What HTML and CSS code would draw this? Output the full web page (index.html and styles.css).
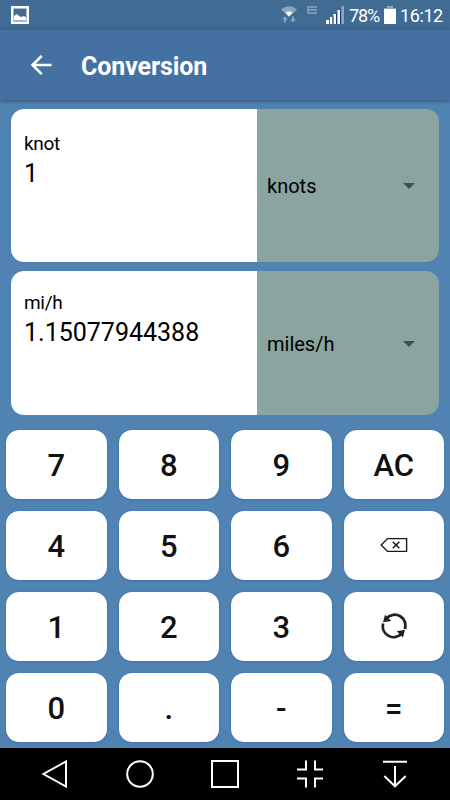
FILE: index.html
```
<!DOCTYPE html>
<html lang="en">
<head>
    <meta charset="UTF-8">
    <meta name="viewport" content="width=device-width, initial-scale=1.0">
    <title>Conversion</title>
    <link rel="stylesheet" href="styles.css">
</head>
<body>

<div class="status-bar">
    <svg class="status-picture" width="18" height="18" viewBox="0 0 18 18">
        <rect x="1" y="1" width="16" height="16" fill="none" stroke="#fff" stroke-width="2"/>
        <rect x="2.500" y="2.500" width="13" height="13" fill="none" stroke="#a9bbd0"/>
        <path d="M3 14.500V10l3-2 2 2 2 1 3-1 2 1.500v3z" fill="#fff"/>
    </svg>
    <svg class="status-wifi" width="16" height="17" viewBox="0 0 16 17">
        <path d="M0 3.500Q8-3 16 3.500L8 11z" fill="#8da6be"/>
        <path d="M4.500 6.500Q8 4.500 11.500 6.500L8 10.500z" fill="#fff"/>
        <path d="M4 10.500l3 3H5v3H3v-3H1zM12 16.500l3-3h-2v-3h-2v3H9z" fill="#8da6be"/>
    </svg>
    <svg class="status-edge" width="10" height="8" viewBox="0 0 10 8">
        <path d="M10 1H1v6h9M1 4h9" fill="none" stroke="#8da6be" stroke-width="1.500"/>
    </svg>
    <svg class="status-signal" width="18" height="18" viewBox="0 0 18 18">
        <path d="M0 14h3v4H0zM4 11h2.500v7H4zM7.500 8H10v10H7.500zM11.500 4H14v14h-2.500z" fill="#fff"/>
        <path d="M6.500 11h.8v7h-.8zM10 7h.8v11H10zM14 3h.9v15H14z" fill="#123c83"/>
        <path d="M15.300 0H18v18h-2.700z" fill="#8da6be"/>
    </svg>
    <span class="battery-level">78%</span>
    <svg class="status-battery" width="12" height="18" viewBox="0 0 12 18">
        <path d="M3 0h6v2h3v2H0V2h3z" fill="#8da6be"/>
        <path d="M0 3h12v15H0z" fill="#fff"/>
    </svg>
    <span class="clock">16:12</span>
</div>

<div class="app-bar">
    <svg class="back-arrow" width="22" height="22" viewBox="0 0 22 22">
        <path d="M21.500 11H2.500M11.700 1.800L2.500 11l9.200 9.200" fill="none" stroke="#fff" stroke-width="2.600"/>
    </svg>
    <h1>Conversion</h1>
</div>

<div class="converter">
    <div class="card card-from">
        <div class="value-box">
            <div class="unit">knot</div>
            <div class="value">1</div>
        </div>
        <div class="unit-select">
            <span>knots</span>
            <span class="caret"></span>
        </div>
    </div>
    <div class="card card-to">
        <div class="value-box">
            <div class="unit">mi/h</div>
            <div class="value">1.15077944388</div>
        </div>
        <div class="unit-select">
            <span>miles/h</span>
            <span class="caret"></span>
        </div>
    </div>
</div>

<div class="keypad">
    <button>7</button>
    <button>8</button>
    <button>9</button>
    <button>AC</button>
    <button>4</button>
    <button>5</button>
    <button>6</button>
    <button aria-label="Delete">
        <svg width="28" height="28" viewBox="0 0 28 28">
            <path d="M7.500 6.600H26.600V19.400H7.500L1.200 13z" fill="none" stroke="#1a1a1a" stroke-width="1.400"/>
            <path d="M12.800 9.700l6.600 6.600M19.400 9.700l-6.600 6.600" stroke="#1a1a1a" stroke-width="1.500"/>
        </svg>
    </button>
    <button>1</button>
    <button>2</button>
    <button>3</button>
    <button aria-label="Swap">
        <svg width="28" height="28" viewBox="0 0 28 28">
            <path d="M6.800 5A10.800 10.800 0 0 1 24.800 16M21.200 21A10.800 10.800 0 0 1 3.200 10.500" fill="none" stroke="#222" stroke-width="2.800"/>
            <path d="M5 1.800L3 9.300l8.300-1.300zM23 24.500l2-7.800-8.300 1.500z" fill="#222"/>
        </svg>
    </button>
    <button>0</button>
    <button>.</button>
    <button>-</button>
    <button>=</button>
</div>

<div class="nav-bar">
    <svg width="28" height="28" viewBox="0 0 28 28"><path d="M25 1.500v25L2.500 14z"/></svg>
    <svg width="28" height="28" viewBox="0 0 28 28"><circle cx="14" cy="14" r="12.800"/></svg>
    <svg width="28" height="28" viewBox="0 0 28 28"><rect x="1" y="1" width="26" height="26"/></svg>
    <svg width="28" height="28" viewBox="0 0 28 28"><path d="M1 9.500h9V.5M27 9.500h-8V.5M1 18.500h9v9M27 18.500h-8v9"/></svg>
    <svg width="28" height="28" viewBox="0 0 28 28"><path d="M2 1.700h24M14 6v20M3.300 16L14 26.300 24.700 16"/></svg>
</div>

</body>
</html>
```
FILE: styles.css
```
* {
    box-sizing: border-box;
}
body {
    width: 450px;
    height: 800px;
    margin: 0;
    display: flex;
    flex-direction: column;
    background-color: #5082b2;
    font-family: Roboto, sans-serif;
    color: #000;
    overflow: hidden;
}
/* Status bar */
.status-bar {
    height: 30px;
    flex-shrink: 0;
    display: flex;
    align-items: flex-start;
    padding: 6px 7px 0 11px;
    background-color: #406b93;
    color: #fff;
    font-size: 18px;
    line-height: 20px;
}
.status-wifi {
    margin-left: 252px;
}
.status-edge {
    margin-left: 10px;
}
.status-signal {
    margin-left: 9px;
}
.battery-level {
    margin-left: 5px;
    width: 35px;
    letter-spacing: -1.1px;
}
.clock {
    margin-left: 4px;
    letter-spacing: -0.4px;
}
/* Title bar */
.app-bar {
    height: 70px;
    flex-shrink: 0;
    display: flex;
    align-items: center;
    padding-left: 30px;
    background-color: #4471a2;
    box-shadow: 0 1px 4px rgba(0, 0, 0, 0.4);
}
.app-bar h1 {
    margin: 3px 0 0 29px;
    font-size: 25px;
    font-weight: 700;
    letter-spacing: -0.1px;
    color: #fff;
}
/* Value cards */
.converter {
    padding: 9px 11px 0;
}
.card {
    display: flex;
    overflow: hidden;
    border-radius: 13px;
    background: linear-gradient(to right, #fff 246px, #8aa4a0 246px);
}
.card-from {
    height: 153px;
    margin-bottom: 9px;
}
.card-to {
    height: 144px;
}
.value-box {
    width: 246px;
    padding: 23px 13px;
}
.card-to .value-box {
    padding-top: 20px;
}
.unit {
    font-size: 19px;
    line-height: 23px;
    letter-spacing: -0.3px;
}
.value {
    font-size: 25px;
    line-height: 38px;
}
.unit-select {
    flex: 1;
    display: flex;
    align-items: center;
    justify-content: space-between;
    padding: 1px 24px 0 10px;
    font-size: 20px;
}
.caret {
    border: 6px solid transparent;
    border-top-color: #42504e;
    border-bottom: 0;
}
/* Keys */
.keypad {
    display: grid;
    grid-template-columns: repeat(4, 1fr);
    grid-auto-rows: 68.5px;
    gap: 12.5px 12px;
    padding: 15px 6px 0;
}
.keypad button {
    display: flex;
    align-items: center;
    justify-content: center;
    padding: 2px 0 0;
    border: 0;
    border-radius: 13px;
    background-color: #fff;
    box-shadow: 0 0 1px #1769a8, 0 1px 2px rgba(20, 60, 110, 0.15);
    color: #111;
    font-family: inherit;
    font-size: 31px;
    font-weight: 500;
}
/* Navigation bar */
.nav-bar {
    height: 52px;
    flex-shrink: 0;
    display: flex;
    align-items: center;
    justify-content: space-between;
    margin-top: auto;
    padding: 0 41px;
    background-color: #000;
}
.nav-bar svg {
    fill: none;
    stroke: #fff;
    stroke-width: 2;
}
```
